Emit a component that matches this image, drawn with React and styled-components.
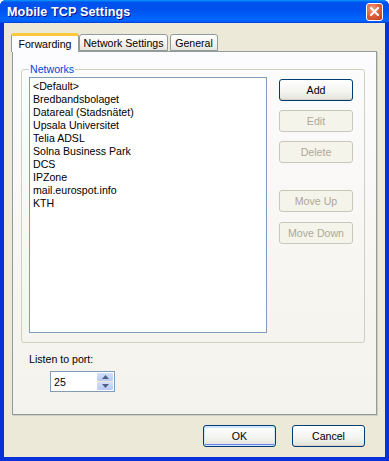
import React from 'react';
import styled, { createGlobalStyle } from 'styled-components';

const GlobalStyle = createGlobalStyle`
  html, body {
    margin: 0;
    padding: 0;
    background: #fff;
  }
  body {
    font-family: Tahoma, "Liberation Sans", Arial, sans-serif;
    font-size: 10.6px;
    color: #000;
  }
`;

const Window = styled.div`
  width: 389px;
  height: 461px;
  box-sizing: border-box;
  display: flex;
  flex-direction: column;
  background: #0831d9;
  border-radius: 6px 6px 0 0;
  overflow: hidden;
`;

const TitleBar = styled.div`
  height: 23px;
  flex: none;
  display: flex;
  align-items: center;
  justify-content: space-between;
  padding: 0 6px 0 7px;
  background: linear-gradient(
    to bottom,
    #0997ff 0%,
    #0053ee 10%,
    #0050ee 40%,
    #0066ff 85%,
    #0060ff 92%,
    #003dd7 100%
  );
`;

const Title = styled.span`
  color: #fff;
  font-family: "Liberation Sans", Arial, sans-serif;
  font-weight: bold;
  font-size: 12.6px;
  text-shadow: 1px 1px 0 #0f1089;
  letter-spacing: 0.1px;
`;

const CloseButton = styled.div`
  width: 15px;
  height: 16px;
  border: 1px solid #fff;
  border-radius: 3px;
  display: flex;
  align-items: center;
  justify-content: center;
  background: radial-gradient(circle at 35% 30%, #f0a07f 0%, #e0633b 45%, #c23b18 100%);
`;

const Client = styled.div`
  flex: 1;
  margin: 0 4px 4px 4px;
  background: #ece9d8;
  display: flex;
  flex-direction: column;
  padding: 10px 8px 9px 8px;
`;

const TabRow = styled.div`
  display: flex;
  align-items: flex-end;
  height: 18px;
  margin-left: -1px;
  position: relative;
  z-index: 1;
`;

const Tab = styled.div`
  box-sizing: border-box;
  height: ${p => (p.$active ? '19px' : '17px')};
  margin-bottom: ${p => (p.$active ? '-1px' : '0')};
  margin-right: ${p => (p.$active ? '0' : '2px')};
  display: flex;
  align-items: center;
  justify-content: center;
  white-space: nowrap;
  width: ${p => p.$w}px;
  border: 1px solid #919b9c;
  border-bottom: ${p => (p.$active ? 'none' : '1px solid #919b9c')};
  border-radius: 3px 3px 0 0;
  background: ${p =>
    p.$active ? '#fcfcfe' : 'linear-gradient(to bottom, #fff 0%, #f4f3ee 60%, #e6e4da 100%)'};
  border-top: ${p => (p.$active ? '3px solid #ffc83c' : '1px solid #919b9c')};
  padding-top: ${p => (p.$active ? '0' : '1px')};
`;

const TabPanel = styled.div`
  box-sizing: border-box;
  width: 365px;
  height: 364px;
  border: 1px solid #919b9c;
  box-shadow: 1px 1px 0 #d0cebf;
  background: linear-gradient(to bottom, #fcfcfe 0%, #f7f6f2 60%, #f3f2ec 100%);
  padding: 11px 11px 0 8px;
  display: flex;
  flex-direction: column;
`;

const GroupBox = styled.fieldset`
  box-sizing: border-box;
  margin: 0;
  height: 280px;
  border: 1px solid #d0d0bf;
  border-radius: 3px;
  padding: 0 11px 7px 7px;
  display: flex;
  gap: 12px;
  min-width: 0;
`;

const Legend = styled.legend`
  color: #0046d5;
  padding: 0 1px;
  margin-left: 0;
  line-height: 12px;
`;

const ListBox = styled.div`
  box-sizing: border-box;
  width: 238px;
  height: 256px;
  margin-top: 2px;
  border: 1px solid #7f9db9;
  background: #fff;
  padding: 2px 0 0 3px;
  display: flex;
  flex-direction: column;
`;

const ListItem = styled.div`
  height: 13px;
  line-height: 13px;
  white-space: nowrap;
`;

const ButtonColumn = styled.div`
  display: flex;
  flex-direction: column;
  padding-top: 4px;
`;

const Button = styled.div`
  box-sizing: border-box;
  width: ${p => p.$w || 74}px;
  height: 22px;
  margin-top: ${p => p.$mt || 0}px;
  display: flex;
  align-items: center;
  justify-content: center;
  border-radius: 3px;
  border: 1px solid ${p => (p.$disabled ? '#c9c7ba' : '#003c74')};
  color: ${p => (p.$disabled ? '#aca899' : '#000')};
  background: ${p =>
    p.$disabled ? '#f5f4ea' : 'linear-gradient(to bottom, #fff 0%, #f3f3ef 60%, #e3e2da 100%)'};
  box-shadow: ${p =>
    p.$focused
      ? 'inset 0 0 0 1px #cee7ff, inset 0 -1px 0 1px #6982ee, inset 0 1px 0 1px #cee7ff'
      : p.$disabled
      ? 'none'
      : 'inset 0 -1px 0 #d6d0c5'};
`;

const PortSection = styled.div`
  display: flex;
  flex-direction: column;
  padding: 10px 0 0 8px;
  gap: 6px;
`;

const Spinner = styled.div`
  box-sizing: border-box;
  width: 65px;
  height: 21px;
  margin-left: 21px;
  border: 1px solid #7f9db9;
  background: #fff;
  display: flex;
  align-items: center;
  justify-content: space-between;
  padding: 0 1px 0 3px;
`;

const SpinButtons = styled.div`
  width: 16px;
  height: 17px;
  display: flex;
  flex-direction: column;
  gap: 1px;
  background: #f0e6c8;
`;

const SpinHalf = styled.div`
  flex: 1;
  display: flex;
  align-items: center;
  justify-content: center;
  background: linear-gradient(to bottom, #d3e0fb, #b7c9f5);
  border-radius: 2px;
`;

const Footer = styled.div`
  display: flex;
  justify-content: flex-end;
  gap: 16px;
  padding: 10px 12px 0 0;
`;

const networks = [
  '<Default>',
  'Bredbandsbolaget',
  'Datareal (Stadsnätet)',
  'Upsala Universitet',
  'Telia ADSL',
  'Solna Business Park',
  'DCS',
  'IPZone',
  'mail.eurospot.info',
  'KTH',
];

const Arrow = ({ up }) => (
  <svg width="7" height="4" viewBox="0 0 7 4">
    <path d={up ? 'M0 4 L3.5 0 L7 4 Z' : 'M0 0 L3.5 4 L7 0 Z'} fill="#4d6185" />
  </svg>
);

const App = () => {
  return (
    <Window>
      <GlobalStyle />
      <TitleBar>
        <Title>Mobile TCP Settings</Title>
        <CloseButton>
          <svg width="9" height="9" viewBox="0 0 9 9">
            <path d="M1 1 L8 8 M8 1 L1 8" stroke="#fff" strokeWidth="2" strokeLinecap="square" />
          </svg>
        </CloseButton>
      </TitleBar>
      <Client>
        <TabRow>
          <Tab $active $w={68}>Forwarding</Tab>
          <Tab $w={89}>Network Settings</Tab>
          <Tab $w={48}>General</Tab>
        </TabRow>
        <TabPanel>
          <GroupBox>
            <Legend>Networks</Legend>
            <ListBox>
              {networks.map(n => (
                <ListItem key={n}>{n}</ListItem>
              ))}
            </ListBox>
            <ButtonColumn>
              <Button>Add</Button>
              <Button $disabled $mt={9}>Edit</Button>
              <Button $disabled $mt={9}>Delete</Button>
              <Button $disabled $mt={27}>Move Up</Button>
              <Button $disabled $mt={10}>Move Down</Button>
            </ButtonColumn>
          </GroupBox>
          <PortSection>
            <span>Listen to port:</span>
            <Spinner>
              <span>25</span>
              <SpinButtons>
                <SpinHalf><Arrow up /></SpinHalf>
                <SpinHalf><Arrow /></SpinHalf>
              </SpinButtons>
            </Spinner>
          </PortSection>
        </TabPanel>
        <Footer>
          <Button $w={73} $focused>OK</Button>
          <Button $w={73}>Cancel</Button>
        </Footer>
      </Client>
    </Window>
  );
};

export default App;
